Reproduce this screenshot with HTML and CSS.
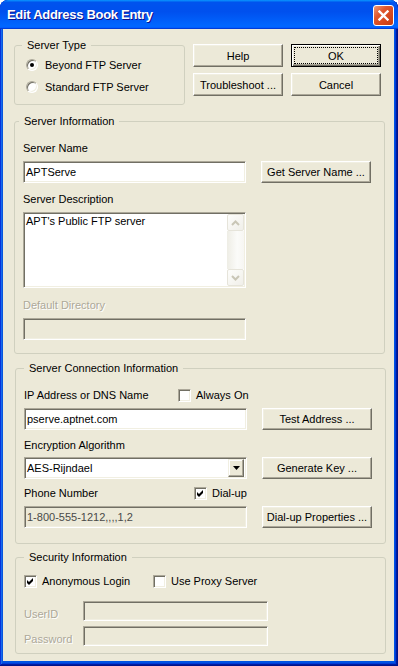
FILE: index.html
```html
<!DOCTYPE html>
<html lang="en">
<head>
  <meta charset="UTF-8">
  <title>Edit Address Book Entry</title>
  <link rel="stylesheet" href="styles.css">
</head>
<body>

  <div class="window">
    <!-- Title bar -->
    <div class="titlebar">
      <span class="title">Edit Address Book Entry</span>
      <button class="close" aria-label="Close">
        <svg width="11" height="11" viewBox="0 0 11 11">
          <path d="M1.5 1.5 L9.5 9.5 M9.5 1.5 L1.5 9.5" stroke="#fff" stroke-width="2.4" stroke-linecap="square"/>
        </svg>
      </button>
    </div>

    <div class="client">
      <div class="top-row">
        <fieldset class="group group-type">
          <legend>Server Type</legend>
          <div class="group-body">
            <div class="option"><span class="radio checked"></span>Beyond FTP Server</div>
            <div class="option"><span class="radio"></span>Standard FTP Server</div>
          </div>
        </fieldset>
        <div class="actions">
          <button class="btn">Help</button>
          <button class="btn default">OK</button>
          <button class="btn">Troubleshoot ...</button>
          <button class="btn">Cancel</button>
        </div>
      </div>

      <!-- Server Information -->
      <fieldset class="group group-info">
        <legend>Server Information</legend>
        <div class="group-body">
          <div class="field-label">Server Name</div>
          <div class="field-row">
            <div class="edit">APTServe</div>
            <button class="btn side">Get Server Name ...</button>
          </div>
          <div class="field-label">Server Description</div>
          <div class="memo">
            <div class="memo-text">APT's Public FTP server</div>
            <div class="scrollbar">
              <span class="sb-btn">
                <svg width="9" height="6" viewBox="0 0 9 6"><path d="M1 5 L4.5 1.5 L8 5" fill="none" stroke="#c9c6b6" stroke-width="2"/></svg>
              </span>
              <span class="sb-track"></span>
              <span class="sb-btn">
                <svg width="9" height="6" viewBox="0 0 9 6"><path d="M1 1 L4.5 4.5 L8 1" fill="none" stroke="#c9c6b6" stroke-width="2"/></svg>
              </span>
            </div>
          </div>
          <div class="field-label off">Default Directory</div>
          <div class="edit off"></div>
        </div>
      </fieldset>

      <!-- Server Connection Information -->
      <fieldset class="group group-conn">
        <legend>Server Connection Information</legend>
        <div class="group-body">
          <div class="label-row">
            <span class="field-label ip-label">IP Address or DNS Name</span>
            <span class="check"><span class="checkbox"></span>Always On</span>
          </div>
          <div class="field-row mb9">
            <div class="edit">pserve.aptnet.com</div>
            <button class="btn side">Test Address ...</button>
          </div>
          <div class="field-label mb5">Encryption Algorithm</div>
          <div class="field-row mb7">
            <div class="combo">
              <span class="combo-text">AES-Rijndael</span>
              <span class="combo-btn">
                <svg width="7" height="4" viewBox="0 0 7 4"><path d="M0 0 H7 L3.5 4 Z" fill="#000"/></svg>
              </span>
            </div>
            <button class="btn side">Generate Key ...</button>
          </div>
          <div class="label-row mb5">
            <span class="field-label phone-label">Phone Number</span>
            <span class="check">
              <span class="checkbox">
                <svg width="7" height="7" viewBox="0 0 7 7"><path d="M0 2 L2 4 L6 0 L6 3 L2 7 L0 5 Z" fill="#000"/></svg>
              </span>Dial-up
            </span>
          </div>
          <div class="field-row last">
            <div class="edit readonly">1-800-555-1212,,,,1,2</div>
            <button class="btn side">Dial-up Properties ...</button>
          </div>
        </div>
      </fieldset>

      <!-- Security Information -->
      <fieldset class="group group-sec">
        <legend>Security Information</legend>
        <div class="group-body">
          <div class="sec-checks">
            <span class="check anon">
              <span class="checkbox">
                <svg width="7" height="7" viewBox="0 0 7 7"><path d="M0 2 L2 4 L6 0 L6 3 L2 7 L0 5 Z" fill="#000"/></svg>
              </span>Anonymous Login
            </span>
            <span class="check"><span class="checkbox"></span>Use Proxy Server</span>
          </div>
          <div class="cred-row">
            <span class="field-label off cred-label">UserID</span>
            <div class="edit off short"></div>
          </div>
          <div class="cred-row">
            <span class="field-label off cred-label">Password</span>
            <div class="edit off short"></div>
          </div>
        </div>
      </fieldset>
    </div>
  </div>

</body>
</html>
```

FILE: styles.css
```css
/* Window frame */
body {
  margin: 0;
  background: #fff;
  font-family: "Liberation Sans", Arial, sans-serif;
  font-size: 11px;
  color: #000;
}

.window {
  width: 398px;
  height: 666px;
  box-sizing: border-box;
  padding: 0 4px 5px 3px;
  background: #0054e3;
  border-radius: 8px 8px 0 0;
  overflow: hidden;
  display: flex;
  flex-direction: column;
  box-shadow: inset -1px -1px #00138c, inset 1px 1px #0831d9,
    inset -2px -2px #001ea0, inset 2px 2px #166aee,
    inset -3px -3px #003bda, inset 3px 3px #0855dd;
}

.titlebar {
  height: 29px;
  margin: 0 -4px 0 -3px;
  padding: 0 4px 0 7px;
  display: flex;
  justify-content: space-between;
  align-items: flex-start;
  border-radius: 8px 8px 0 0;
  background: linear-gradient(180deg, #0997ff, #0053ee 8%, #0050ee 40%, #06f 88%, #06f 93%, #005bff 95%, #003dd7 96%, #003dd7);
}

.title {
  color: #fff;
  font-weight: bold;
  font-size: 13px;
  letter-spacing: -0.3px;
  line-height: 30px;
  text-shadow: 1px 1px #0f1089;
}

.close {
  width: 21px;
  height: 21px;
  margin-top: 5px;
  padding: 0;
  box-sizing: border-box;
  border: 1px solid #fff;
  border-radius: 3px;
  display: flex;
  align-items: center;
  justify-content: center;
  background: linear-gradient(135deg, #f09a78, #e0582f 35%, #d4461d 70%, #c23c14);
}

.client {
  flex: 1;
  background: #ece9d8;
}

/* Group boxes */
.group {
  margin: 0;
  padding: 0;
  min-width: 0;
  box-sizing: border-box;
  border: 1px solid #d0d0bf;
  border-radius: 3px;
}

.group legend {
  margin-left: 7px;
  padding: 0 5px;
  height: 13px;
  line-height: 13px;
}

.group-body {
  padding: 14px 0 13px 8px;
}

.top-row {
  display: flex;
  align-items: flex-start;
  gap: 8px;
  padding: 10px 0 0 11px;
}

.group-type {
  width: 171px;
}

.group-type .group-body {
  padding: 5px 0 9px 11px;
}

.option {
  display: flex;
  align-items: center;
  gap: 7px;
  height: 16px;
}

.option + .option {
  margin-top: 6px;
}

.radio {
  width: 12px;
  height: 12px;
  box-sizing: border-box;
  border-radius: 50%;
  background: #fff;
  border: 1px solid;
  border-color: #aca899 #fff #fff #aca899;
  box-shadow: inset 1px 1px #716f64, inset -1px -1px #f1efe2;
  display: flex;
  align-items: center;
  justify-content: center;
}

.radio.checked::after {
  content: "";
  width: 4px;
  height: 4px;
  border-radius: 50%;
  background: #000;
}

.actions {
  display: grid;
  grid-template-columns: 90px 90px;
  grid-auto-rows: 23px;
  gap: 6px 8px;
  margin-top: 5px;
}

.group-info {
  width: 371px;
  margin: 10px 0 0 11px;
}

.group-info legend {
  margin-left: 4px;
}

.group-conn {
  width: 371px;
  margin: 8px 0 0 12px;
}

.group-conn legend,
.group-sec legend {
  margin-left: 8px;
}

.group-conn .group-body {
  padding: 13px 0 15px 8px;
}

.group-sec {
  width: 371px;
  margin: 7px 0 0 12px;
}

.group-sec .group-body {
  padding: 10px 0 7px 8px;
}

/* Buttons */
.btn {
  font-family: "Liberation Sans", Arial, sans-serif;
  font-size: 11px;
  color: #000;
  background: #ece9d8;
  padding: 0;
  box-sizing: border-box;
  border: 1px solid;
  border-color: #fff #716f64 #716f64 #fff;
  box-shadow: inset -1px -1px #aca899, inset 1px 1px #f1efe2;
}

.btn.default {
  border: 1px solid #000;
  box-shadow: inset 1px 1px #fff, inset -1px -1px #716f64, inset -2px -2px #aca899;
  outline: 1px dotted #000;
  outline-offset: -4px;
}

.btn.side {
  width: 110px;
  height: 22px;
}

/* Fields */
.field-label {
  display: block;
  height: 13px;
  line-height: 13px;
  margin-bottom: 6px;
  white-space: nowrap;
}

.field-label.off {
  color: #aca899;
  text-shadow: 1px 1px #fff;
}

.field-row {
  display: flex;
  align-items: center;
  gap: 15px;
  margin-bottom: 10px;
}

.field-row.last {
  margin-bottom: 0;
}

.mb5 { margin-bottom: 5px; }
.mb7 { margin-bottom: 7px; }
.mb9 { margin-bottom: 9px; }

.edit,
.memo,
.combo {
  width: 223px;
  box-sizing: border-box;
  background: #fff;
  border: 1px solid;
  border-color: #aca899 #fff #fff #aca899;
  box-shadow: inset 1px 1px #716f64, inset -1px -1px #f1efe2;
}

.edit {
  height: 22px;
  padding: 0 2px;
  line-height: 20px;
  white-space: nowrap;
}

.edit.off {
  background: #ece9d8;
}

.edit.readonly {
  background: #ece9d8;
  color: #4a4a48;
}

.edit.short {
  width: 185px;
  height: 20px;
}

.memo {
  display: flex;
  height: 76px;
  padding: 1px;
  margin-bottom: 11px;
}

.memo-text {
  flex: 1;
  padding: 1px 1px;
  line-height: 13px;
}

.scrollbar {
  width: 17px;
  display: flex;
  flex-direction: column;
}

.sb-btn {
  height: 17px;
  box-sizing: border-box;
  border: 1px solid #e6e4da;
  border-radius: 2px;
  background: linear-gradient(135deg, #fdfdfb, #f0efe9);
  display: flex;
  align-items: center;
  justify-content: center;
}

.sb-track {
  flex: 1;
  background: linear-gradient(90deg, #eeede5, #fbfbf9 60%, #f7f6f2);
}

.combo {
  display: flex;
  align-items: center;
  height: 22px;
  padding: 1px 2px 1px 1px;
}

.combo-text {
  flex: 1;
  padding-left: 1px;
}

.combo-btn {
  width: 16px;
  height: 18px;
  box-sizing: border-box;
  background: #ece9d8;
  border: 1px solid;
  border-color: #f1efe2 #716f64 #716f64 #f1efe2;
  box-shadow: inset -1px -1px #aca899, inset 1px 1px #fff;
  display: flex;
  align-items: center;
  justify-content: center;
}

/* Checkboxes */
.label-row {
  display: flex;
  align-items: center;
  height: 14px;
  margin-bottom: 6px;
}

.label-row .field-label {
  margin-bottom: 0;
}

.ip-label {
  width: 154px;
}

.phone-label {
  width: 170px;
}

.check {
  display: flex;
  align-items: center;
  gap: 5px;
  white-space: nowrap;
}

.check.anon {
  width: 129px;
}

.checkbox {
  width: 13px;
  height: 13px;
  box-sizing: border-box;
  background: #fff;
  border: 1px solid;
  border-color: #aca899 #fff #fff #aca899;
  box-shadow: inset 1px 1px #716f64, inset -1px -1px #f1efe2;
  display: flex;
  align-items: center;
  justify-content: center;
}

.sec-checks {
  display: flex;
  align-items: center;
  height: 14px;
  margin-bottom: 13px;
}

.cred-row {
  display: flex;
  align-items: flex-end;
  height: 20px;
}

.cred-row + .cred-row {
  margin-top: 5px;
}

.cred-label {
  width: 59px;
  margin-bottom: 0;
}
```
